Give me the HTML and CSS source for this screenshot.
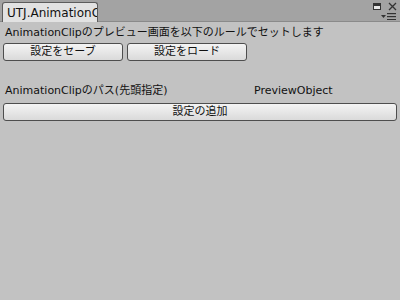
FILE: index.html
```html
<!DOCTYPE html>
<html>
<head>
<meta charset="utf-8">
<link rel="stylesheet" href="styles.css">
</head>
<body>
<div class="window">
  <div class="tabbar">
    <div class="tab"><span class="tab-label">UTJ.AnimationClip</span></div>
    <div class="win-controls">
      <div class="ctl-row">
        <svg class="ico-max" width="9" height="8" viewBox="0 0 9 8"><rect x="0.5" y="0.5" width="7" height="6" fill="#e8e8e8" stroke="#333"/><rect x="1" y="1" width="6" height="2" fill="#333"/></svg>
        <svg class="ico-close" width="9" height="9" viewBox="0 0 9 9"><path d="M1 1 L8 8 M8 1 L1 8" stroke="#333" stroke-width="1.3"/></svg>
      </div>
      <div class="ctl-row">
        <svg class="ico-menu" width="16" height="7" viewBox="0 0 16 7"><path d="M0 2 L5 2 L2.5 5 Z" fill="#333"/><rect x="6" y="0" width="9" height="1.2" fill="#333"/><rect x="6" y="3" width="9" height="1.2" fill="#333"/><rect x="6" y="6" width="9" height="1.2" fill="#333"/></svg>
      </div>
    </div>
  </div>
  <div class="content">
    <div class="line desc">AnimationClipのプレビュー画面を以下のルールでセットします</div>
    <div class="btn-row">
      <button class="btn btn-half">設定をセーブ</button>
      <button class="btn btn-half">設定をロード</button>
    </div>
    <div class="label-row">
      <span class="col-a">AnimationClipのパス(先頭指定)</span>
      <span class="col-b">PreviewObject</span>
    </div>
    <button class="btn btn-full">設定の追加</button>
  </div>
</div>
</body>
</html>
```
FILE: styles.css
```css
* { box-sizing: border-box; }
html, body { margin: 0; padding: 0; }
body {
  width: 400px;
  height: 300px;
  background: #c2c2c2;
  font-family: "DejaVu Sans", "Noto Sans CJK JP", sans-serif;
  font-size: 11px;
  color: #111;
  overflow: hidden;
}
.window {
  display: flex;
  flex-direction: column;
  height: 300px;
}
.tabbar {
  height: 22px;
  background: #a3a3a3;
  display: flex;
  justify-content: space-between;
  border-bottom: 1px solid #8a8a8a;
}
.tab {
  margin: 2px 0 0 2px;
  width: 96px;
  height: 20px;
  background: #e2e2e2;
  border: 1px solid #5c5c5c;
  border-bottom: none;
  border-radius: 3px 3px 0 0;
  overflow: hidden;
  white-space: nowrap;
  padding: 3px 0 0 4px;
  font-size: 12px;
  color: #111;
}
.win-controls {
  display: flex;
  flex-direction: column;
  align-items: flex-end;
  padding: 2px 3px 0 0;
  gap: 2px;
}
.ctl-row {
  display: flex;
  gap: 6px;
  align-items: center;
}
.content {
  flex: 1;
  padding: 2px 3px 0 3px;
  display: flex;
  flex-direction: column;
}
.desc {
  height: 17px;
  line-height: 17px;
  padding-left: 2px;
}
.btn-row {
  display: flex;
  gap: 4px;
  margin-top: 2px;
}
.btn {
  font-family: "DejaVu Sans", "Noto Sans CJK JP", sans-serif;
  font-size: 11px;
  color: #111;
  height: 18px;
  padding: 0;
  border: 1px solid #4e4e4e;
  border-radius: 3px;
  background: linear-gradient(#f4f4f4, #dadada);
  line-height: 14px;
}
.btn-half { width: 120px; }
.label-row {
  display: flex;
  margin-top: 21px;
  height: 18px;
  line-height: 18px;
  padding-left: 2px;
}
.col-a { width: 249px; }
.btn-full {
  width: 394px;
  margin-top: 3px;
}
```
